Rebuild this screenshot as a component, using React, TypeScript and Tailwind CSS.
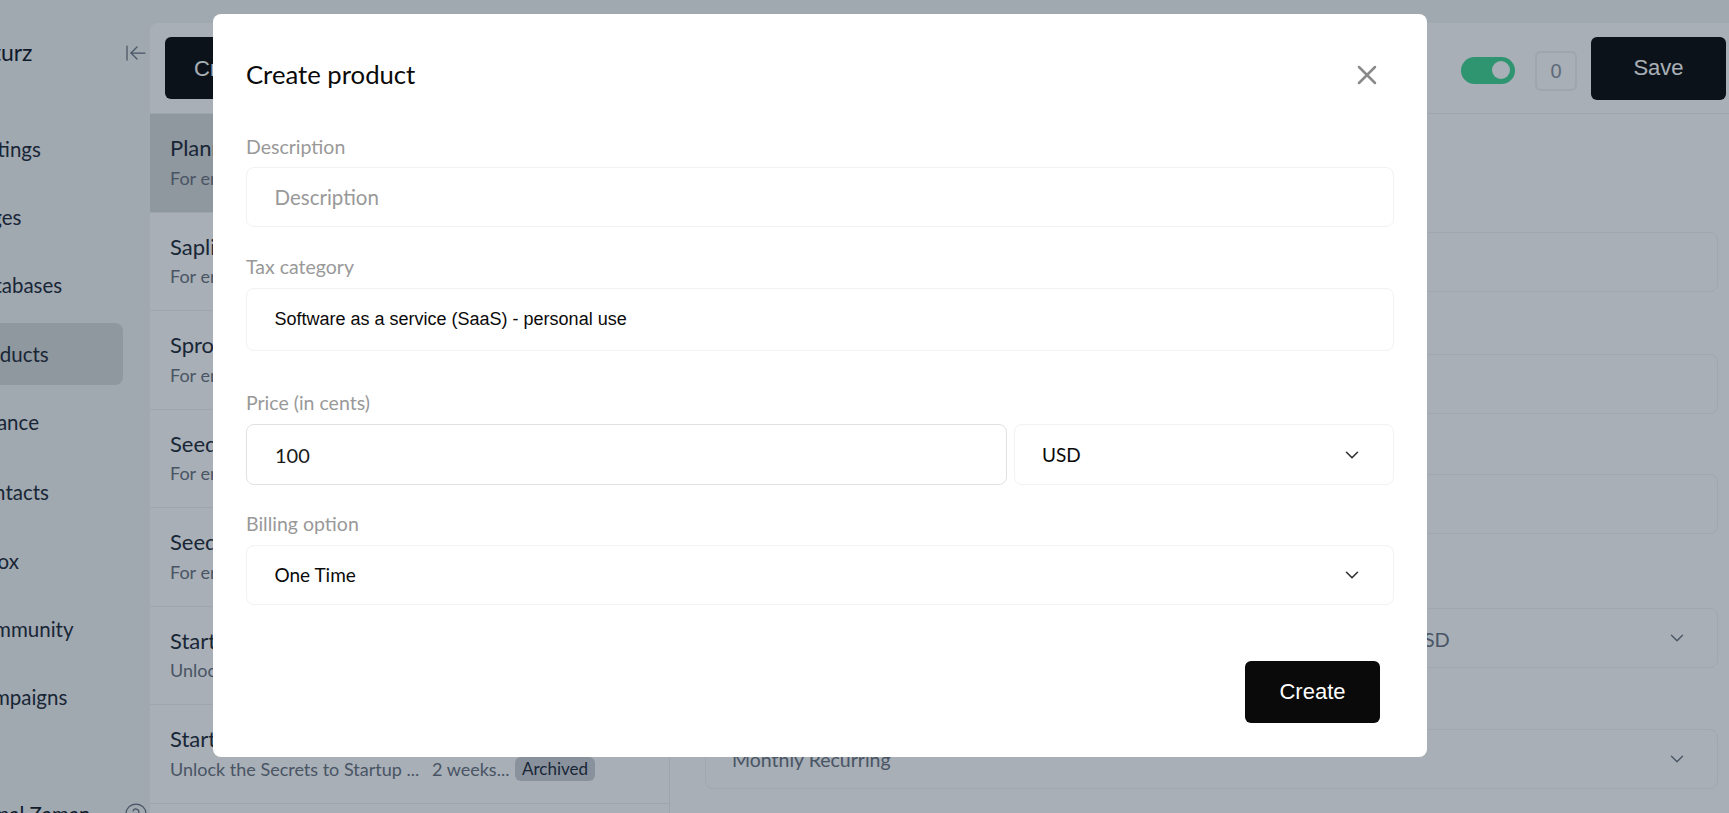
import { ArrowLeftToLine, ChevronDown, CircleHelp, X } from "lucide-react";

const font = "font-['Lato','Noto_Sans',sans-serif]";
const arial = "font-['Liberation_Sans',Arial,sans-serif]";

const navItems = [
  { label: "Settings", h: "h-[68px]" },
  { label: "Pages", h: "h-[68px]" },
  { label: "Databases", h: "h-[69px]" },
  { label: "Products", h: "h-[68px]", active: true },
  { label: "Finance", h: "h-[69px]" },
  { label: "Contacts", h: "h-[70px]" },
  { label: "Inbox", h: "h-[68px]" },
  { label: "Community", h: "h-[68px]" },
  { label: "Campaigns", h: "h-[68px]" },
];

const products = [
  { title: "Planner", sub: "For entrepreneurs ready to grow", active: true },
  { title: "Sapling", sub: "For entrepreneurs ready to grow" },
  { title: "Sprout", sub: "For entrepreneurs ready to grow" },
  { title: "Seed", sub: "For entrepreneurs ready to grow" },
  { title: "Seed", sub: "For entrepreneurs ready to grow" },
  { title: "Startup", sub: "Unlock the Secrets to Startup ..." },
  { title: "Startup", sub: "Unlock the Secrets to Startup ...", archived: true },
];

function Sidebar() {
  return (
    <aside className="w-[150px] shrink-0 overflow-hidden text-[20.5px] text-[#1f2937]">
      <div className="flex h-[115px] items-start justify-between pt-[38px] pr-[2px]">
        <span className="-ml-[46px] text-[23px] leading-[28px] text-[#111827]">Venturz</span>
        <ArrowLeftToLine size={24} strokeWidth={1.25} className="mt-[3px] text-[#6b7280]" />
      </div>
      <nav className="flex flex-col">
        {navItems.map((item) => (
          <div key={item.label} className={`${item.h} flex items-center`}>
            <div
              className={`-ml-[43px] flex h-[62px] w-[166px] items-center rounded-lg pl-[12px] whitespace-nowrap ${
                item.active ? "bg-[#d8d9db]" : ""
              }`}
            >
              {item.label}
            </div>
          </div>
        ))}
      </nav>
      <div className="mt-[66px] flex items-start justify-between pr-[2px]">
        <span className="mt-[2px] -ml-[26px] whitespace-nowrap text-[#111827]">Jamal Zaman</span>
        <CircleHelp size={24} strokeWidth={1.25} className="mt-[5px] text-[#6b7280]" />
      </div>
    </aside>
  );
}

function ProductList() {
  return (
    <section className="flex w-[520px] shrink-0 flex-col border-r border-[#eef0f2]">
      <div className="flex h-[91px] shrink-0 items-center border-b border-[#eef0f2] pl-[15px]">
        <button className={`${arial} h-[62px] w-[200px] rounded-md bg-[#0a0a0a] pl-[29px] text-left text-[22px] text-white`}>
          Create
        </button>
      </div>
      {products.map((p, i) => (
        <div
          key={i}
          className={`flex h-[98.5px] shrink-0 flex-col border-b border-[#eef0f2] pt-[19px] pl-[20px] ${
            p.active ? "bg-[#d8d9db]" : ""
          }`}
        >
          <div className="text-[22px] leading-[30px] text-[#1f2937]">{p.title}</div>
          <div className="mt-[2.5px] flex items-center text-[18px] leading-[24px] whitespace-nowrap text-[#6b7280]">
            <span className="w-[262px]">{p.sub}</span>
            <span className="w-[83px]">2 weeks...</span>
            {p.archived && (
              <span className="rounded-md bg-[#cfd2d7] px-[7px] text-[17px] text-[#1f2937]">Archived</span>
            )}
          </div>
        </div>
      ))}
    </section>
  );
}

function DetailPanel() {
  const boxes = ["mt-[118px]", "mt-[62px]", "mt-[60px]"];
  return (
    <section className="min-w-0 flex-1">
      <div className="flex h-[91px] items-center justify-end border-b border-[#eef0f2] pr-[3px]">
        <div className="mt-[4px] mr-[20px] flex h-[27px] w-[54px] items-center justify-end rounded-full bg-[#42d592] pr-[5px]">
          <div className="h-[18px] w-[18px] rounded-full bg-white" />
        </div>
        <div className={`${arial} mt-[6px] mr-[14px] flex h-[40px] w-[42px] items-center justify-center rounded-md border-2 border-[#eef0f2] text-[20px] text-[#8b94a0]`}>
          0
        </div>
        <button className={`${arial} h-[63px] w-[135px] rounded-md bg-[#0a0a0a] pb-[1px] text-[22px] text-white`}>Save</button>
      </div>
      <div className="flex flex-col pr-[11px] pl-[35px]">
        {boxes.map((m) => (
          <div key={m} className={`${m} h-[60px] rounded-lg border border-[#f1f2f4]`} />
        ))}
        <div className="mt-[74px] flex h-[60px] items-center justify-between rounded-lg border border-[#f1f2f4] pr-[29px] pl-[703px] text-[20px] text-[#6b7280]">
          <span className="pt-[1px]">USD</span>
          <ChevronDown size={22} strokeWidth={1.5} />
        </div>
        <div className="mt-[61px] flex h-[60px] items-center justify-between rounded-lg border border-[#f1f2f4] pr-[29px] pl-[26px] text-[19.5px] text-[#6b7280]">
          <span className="pt-[1px]">Monthly Recurring</span>
          <ChevronDown size={22} strokeWidth={1.5} />
        </div>
      </div>
    </section>
  );
}

function Label({ children, className = "" }: { children: string; className?: string }) {
  return <div className={`text-[19.5px] leading-[24px] text-[#999999] ${className}`}>{children}</div>;
}

function Modal() {
  return (
    <div className={`${font} fixed inset-0 bg-[rgba(13,32,52,0.36)]`}>
      <div className="mt-[14px] ml-[213px] flex h-[743px] w-[1214px] flex-col rounded-lg bg-white pr-[33px] pl-[33px]">
        <div className="flex h-[121px] shrink-0 items-start justify-between pt-[45px]">
          <h2 className="text-[25.7px] leading-[30px] text-[#0a0a0a]">Create product</h2>
          <X size={32} strokeWidth={1.9} className="mr-[11px] text-[#8a8a8a]" />
        </div>
        <Label>Description</Label>
        <div className="mt-[8px] flex h-[60px] shrink-0 items-center rounded-lg border border-[#f2f2f2] pl-[27.5px] text-[20.5px] text-[#999999]">
          Description
        </div>
        <Label className="mt-[28px]">Tax category</Label>
        <div className={`${arial} mt-[9px] flex h-[63px] shrink-0 items-center rounded-lg border border-[#f2f2f2] pl-[27.5px] text-[18px] text-[#0a0a0a]`}>
          Software as a service (SaaS) - personal use
        </div>
        <Label className="mt-[40px]">Price (in cents)</Label>
        <div className="mt-[9px] flex h-[61px] shrink-0 gap-[7px]">
          <div className="flex w-[761px] items-center rounded-lg border border-[#e2e2e2] pl-[28px] text-[20px] text-[#1a1a1a]">
            100
          </div>
          <div className="flex flex-1 items-center justify-between rounded-lg border border-[#f2f2f2] pr-[30px] pl-[27px] text-[19px] text-[#0a0a0a]">
            <span className="pt-[2px]">USD</span>
            <ChevronDown size={22} strokeWidth={1.75} className="text-[#333333]" />
          </div>
        </div>
        <Label className="mt-[27px]">Billing option</Label>
        <div className="mt-[9px] flex h-[60px] shrink-0 items-center justify-between rounded-lg border border-[#f2f2f2] pr-[30px] pl-[27.5px] text-[19px] text-[#0a0a0a]">
          <span className="pt-[1px]">One Time</span>
          <ChevronDown size={22} strokeWidth={1.75} className="text-[#333333]" />
        </div>
        <div className="mt-[56px] flex justify-end pr-[14px]">
          <button className={`${arial} h-[62px] w-[135px] rounded-md bg-[#0a0a0a] pb-[2px] text-[22px] text-white`}>Create</button>
        </div>
      </div>
    </div>
  );
}

export default function App() {
  return (
    <div className={`${font} relative flex h-screen w-full overflow-hidden bg-[#f3f4f6]`}>
      <Sidebar />
      <main className="mt-[23px] flex min-w-0 flex-1 rounded-tl-lg bg-white">
        <ProductList />
        <DetailPanel />
      </main>
      <Modal />
    </div>
  );
}
